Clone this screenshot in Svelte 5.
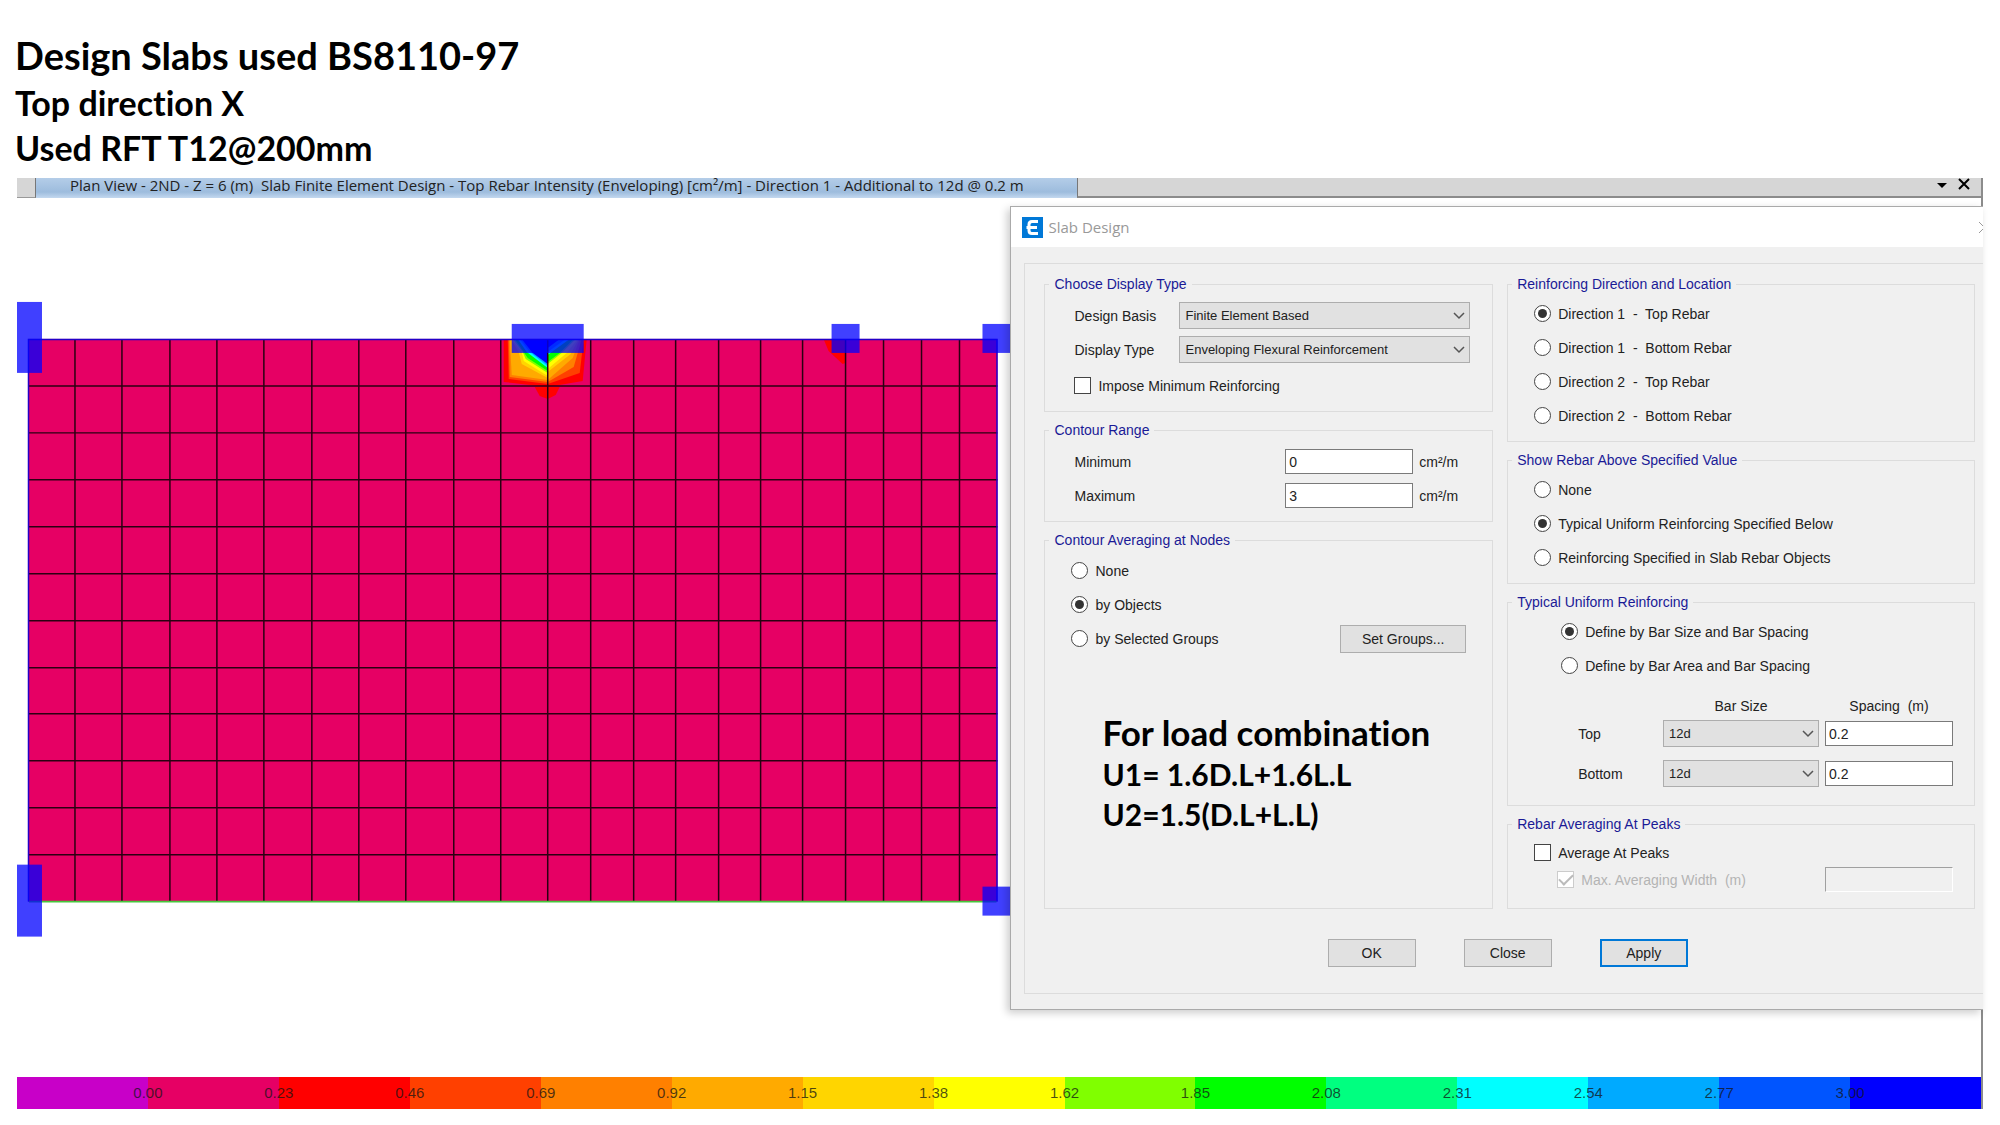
<script lang="ts">
  interface Option {
    value: string;
    label: string;
  }

  const meshX = [75, 122, 170, 217, 264, 312, 359, 406, 454, 501, 548, 591, 634, 676, 719, 761, 803, 846, 884, 922, 960];
  const meshY = [386, 433, 480, 527, 574, 621, 668, 714, 761, 808, 855];

  const columns = [
    { x: 17, y: 302, w: 25, h: 71 },
    { x: 17, y: 865, w: 25, h: 72 },
    { x: 512, y: 324, w: 72, h: 29 },
    { x: 832, y: 324, w: 28, h: 29 },
    { x: 983, y: 324, w: 28, h: 29 },
    { x: 983, y: 887, w: 28, h: 29 },
  ];

  // Contour bands around the supports, outermost first
  const bands = [
    { fill: '#ff0000', points: '504,339 504,382 548,387 583,381 587,339' },
    { fill: '#ff4000', points: '508,339 509,379 548,384 580,373 584,339' },
    { fill: '#ff8000', points: '509,339 510,377 548,382 574,367 582,339' },
    { fill: '#ffaa00', points: '510,339 512,375 548,380 573,358 580,339' },
    { fill: '#ffd500', points: '511,339 519,352 522,364 548,378 548,372 571,354 579,339' },
    { fill: '#ffff00', points: '512,339 522,352 524,361 548,376 548,369 567,353 578,339' },
    { fill: '#80ff00', points: '513,339 523,352 526,359 548,373 548,364 562,353 576,339' },
    { fill: '#00ff00', points: '515,339 524,352 528,358 548,371 548,362 560,353 574,339' },
    { fill: '#00ffff', points: '518,339 527,352 548,368 548,355 552,352 570,339' },
    { fill: '#00aaff', points: '520,339 530,352 548,366 548,352 566,339' },
    { fill: '#0000ff', points: '522,339 533,353 548,364 548,348 560,339' },
    { fill: '#ff0000', points: '535,387 560,387 556,395 548,399 540,396' },
    { fill: '#ff0000', points: '824,339 829,351 843,364 846,363 846,339' },
  ];

  const scaleColors = [
    '#c800c8', '#e60064', '#ff0000', '#ff4000', '#ff8000', '#ffaa00', '#ffd500', '#ffff00',
    '#80ff00', '#00ff00', '#00ff80', '#00ffff', '#00aaff', '#0055ff', '#0000ff',
  ];
  const scaleLabels = ['0.00', '0.23', '0.46', '0.69', '0.92', '1.15', '1.38', '1.62', '1.85', '2.08', '2.31', '2.54', '2.77', '3.00'];

  const directionOptions: Option[] = [
    { value: 'd1-top', label: 'Direction 1  -  Top Rebar' },
    { value: 'd1-bottom', label: 'Direction 1  -  Bottom Rebar' },
    { value: 'd2-top', label: 'Direction 2  -  Top Rebar' },
    { value: 'd2-bottom', label: 'Direction 2  -  Bottom Rebar' },
  ];
  const showOptions: Option[] = [
    { value: 'none', label: 'None' },
    { value: 'typical', label: 'Typical Uniform Reinforcing Specified Below' },
    { value: 'objects', label: 'Reinforcing Specified in Slab Rebar Objects' },
  ];
  const defineOptions: Option[] = [
    { value: 'size', label: 'Define by Bar Size and Bar Spacing' },
    { value: 'area', label: 'Define by Bar Area and Bar Spacing' },
  ];
  const averagingOptions: Option[] = [
    { value: 'none', label: 'None' },
    { value: 'objects', label: 'by Objects' },
    { value: 'groups', label: 'by Selected Groups' },
  ];

  let direction = $state('d1-top');
  let showAbove = $state('typical');
  let defineBy = $state('size');
  let averaging = $state('objects');
  let minimum = $state('0');
  let maximum = $state('3');
  let topSpacing = $state('0.2');
  let bottomSpacing = $state('0.2');
  let imposeMinimum = $state(false);
  let averageAtPeaks = $state(false);
</script>

{#snippet dropdown(id: string, options: string[])}
  <span class="dropdown">
    <select {id}>
      {#each options as option}
        <option>{option}</option>
      {/each}
    </select>
    <svg viewBox="0 0 12 8" aria-hidden="true"><path d="M1 1l5 5 5-5" /></svg>
  </span>
{/snippet}

<div class="page">
  <header>
    <h1>Design Slabs used BS8110-97</h1>
    <p>Top direction X</p>
    <p>Used RFT T12@200mm</p>
  </header>

  <main>
    <div class="tab-bar">
      <span class="tab-stub"></span>
      <div class="tab">Plan View - 2ND - Z = 6 (m)&nbsp; Slab Finite Element Design - Top Rebar Intensity (Enveloping) [cm²/m] - Direction 1 - Additional to 12d @ 0.2 m</div>
      <div class="tab-tools">
        <button type="button" aria-label="Window list">
          <svg width="12" height="14" viewBox="0 0 12 14"><path d="M1 5h10l-5 5z" fill="#000" /></svg>
        </button>
        <button type="button" aria-label="Close view">
          <svg width="12" height="14" viewBox="0 0 12 14"><path d="M1 1l10 10M11 1L1 11" stroke="#000" stroke-width="2" /></svg>
        </button>
      </div>
    </div>

    <div class="workspace">
      <svg class="plan" viewBox="17 198 994 879" preserveAspectRatio="xMinYMin meet" role="img" aria-label="Slab plan">
        <rect x="28" y="339" width="970" height="563" fill="#e60064" />
        {#each bands as band}
          <polygon points={band.points} fill={band.fill} />
        {/each}
        <g class="mesh">
          {#each meshX as x}
            <line x1={x} x2={x} y1="339" y2="902" />
          {/each}
          {#each meshY as y}
            <line x1="28" x2="998" y1={y} y2={y} />
          {/each}
        </g>
        <path class="edge" d="M28.500 902V339.500H997.500V902" />
        <line class="edge-bottom" x1="29" x2="997" y1="902" y2="902" />
        {#each columns as c}
          <rect class="column" x={c.x} y={c.y} width={c.w} height={c.h} />
        {/each}
      </svg>

      <section class="dialog">
        <div class="title-bar">
          <svg class="logo" viewBox="0 0 21 21" aria-hidden="true">
            <rect width="21" height="21" fill="#0078d7" />
            <path d="M16 4.500H10Q7 4.500 7 7.500V13.500Q7 16.500 10 16.500H16M4.500 10.500H15" />
          </svg>
          <h2>Slab Design</h2>
          <button type="button" class="close" aria-label="Close dialog">
            <svg width="13" height="13" viewBox="0 0 13 13"><path d="M1 1l11 11M12 1L1 12" stroke="#999" /></svg>
          </button>
        </div>

        <form class="frame" onsubmit={(e) => e.preventDefault()}>
          <div class="groups">
            <div class="stack">
              <fieldset>
                <legend>Choose Display Type</legend>
                <div class="row">
                  <label class="name" for="design-basis">Design Basis</label>
                  {@render dropdown('design-basis', ['Finite Element Based', 'Strip Based'])}
                </div>
                <div class="row">
                  <label class="name" for="display-type">Display Type</label>
                  {@render dropdown('display-type', ['Enveloping Flexural Reinforcement'])}
                </div>
                <label class="choice impose">
                  <input type="checkbox" bind:checked={imposeMinimum} />
                  <span>Impose Minimum Reinforcing</span>
                </label>
              </fieldset>

              <fieldset>
                <legend>Contour Range</legend>
                <div class="row range">
                  <label for="minimum">Minimum</label>
                  <input id="minimum" type="text" bind:value={minimum} />
                  <span class="unit">cm²/m</span>
                </div>
                <div class="row range">
                  <label for="maximum">Maximum</label>
                  <input id="maximum" type="text" bind:value={maximum} />
                  <span class="unit">cm²/m</span>
                </div>
              </fieldset>

              <fieldset class="options grow">
                <legend>Contour Averaging at Nodes</legend>
                {#each averagingOptions as option}
                  <div class="row split">
                    <label class="choice">
                      <input type="radio" name="averaging" value={option.value} bind:group={averaging} />
                      <span>{option.label}</span>
                    </label>
                    {#if option.value === 'groups'}
                      <button type="button" class="btn set-groups">Set Groups...</button>
                    {/if}
                  </div>
                {/each}
                <div class="note">
                  <h3>For load combination</h3>
                  <p>U1= 1.6D.L+1.6L.L</p>
                  <p>U2=1.5(D.L+L.L)</p>
                </div>
              </fieldset>
            </div>

            <div class="stack">
              <fieldset class="options">
                <legend>Reinforcing Direction and Location</legend>
                {#each directionOptions as option}
                  <label class="choice">
                    <input type="radio" name="direction" value={option.value} bind:group={direction} />
                    <span>{option.label}</span>
                  </label>
                {/each}
              </fieldset>

              <fieldset class="options">
                <legend>Show Rebar Above Specified Value</legend>
                {#each showOptions as option}
                  <label class="choice">
                    <input type="radio" name="show-above" value={option.value} bind:group={showAbove} />
                    <span>{option.label}</span>
                  </label>
                {/each}
              </fieldset>

              <fieldset class="options">
                <legend>Typical Uniform Reinforcing</legend>
                <div class="indent">
                  {#each defineOptions as option}
                    <label class="choice">
                      <input type="radio" name="define-by" value={option.value} bind:group={defineBy} />
                      <span>{option.label}</span>
                    </label>
                  {/each}
                </div>
                <div class="bars">
                  <span></span>
                  <span class="head">Bar Size</span>
                  <span class="head">Spacing&nbsp; (m)</span>
                  <label for="top-bar">Top</label>
                  {@render dropdown('top-bar', ['12d', '16d', '20d'])}
                  <input type="text" aria-label="Top spacing" bind:value={topSpacing} />
                  <label for="bottom-bar">Bottom</label>
                  {@render dropdown('bottom-bar', ['12d', '16d', '20d'])}
                  <input type="text" aria-label="Bottom spacing" bind:value={bottomSpacing} />
                </div>
              </fieldset>

              <fieldset class="options peaks">
                <legend>Rebar Averaging At Peaks</legend>
                <label class="choice">
                  <input type="checkbox" bind:checked={averageAtPeaks} />
                  <span>Average At Peaks</span>
                </label>
                <div class="row split">
                  <label class="choice disabled">
                    <input type="checkbox" checked disabled />
                    <span>Max. Averaging Width&nbsp; (m)</span>
                  </label>
                  <input type="text" aria-label="Max. averaging width" disabled />
                </div>
              </fieldset>
            </div>
          </div>

          <div class="actions">
            <button type="submit" class="btn">OK</button>
            <button type="button" class="btn">Close</button>
            <button type="button" class="btn default">Apply</button>
          </div>
        </form>
      </section>
    </div>

    <div class="scale">
      <div class="scale-colors">
        {#each scaleColors as color}
          <span style="background: {color}"></span>
        {/each}
      </div>
      <div class="scale-labels">
        {#each scaleLabels as label}
          <span>{label}</span>
        {/each}
      </div>
    </div>
  </main>
</div>

<style>
  :global(body) {
    background: #fff;
  }

  .page {
    padding: 30px 17px 16px;
    color: #222;
    font-family: 'Liberation Sans', Arial, sans-serif;
    font-size: 14px;
    line-height: 18px;
  }

  .page * {
    box-sizing: border-box;
  }

  h1,
  h2,
  h3,
  p {
    margin: 0;
  }

  button,
  input,
  select {
    margin: 0;
    padding: 0;
    font: inherit;
    color: inherit;
  }

  header,
  .note {
    color: #000;
    font-family: Lato, 'Open Sans', sans-serif;
    font-variant-ligatures: none;
    font-weight: 700;
  }

  header {
    margin-left: -2px;
    padding-bottom: 8px;
    font-size: 34px;
    line-height: 45px;
  }

  h1 {
    font-size: 38px;
    line-height: 50px;
  }

  main {
    border-right: 2px solid #8c8c8c;
  }

  .tab-bar {
    display: flex;
    height: 20px;
    background: #d6d6d6;
  }

  .tab-stub {
    width: 19px;
    border-right: 1px solid #777;
    border-bottom: 1px solid #999;
  }

  .tab {
    flex: 0 0 53%;
    padding-left: 34px;
    background: linear-gradient(#b4cde8, #9dbcdd 70%, #c3d8ef);
    font-family: 'Open Sans', sans-serif;
    font-size: 15px;
    line-height: 14px;
    white-space: nowrap;
  }

  .tab-tools {
    display: flex;
    flex: 1;
    justify-content: flex-end;
    align-items: flex-start;
    gap: 10px;
    padding-right: 11px;
    border-left: 1px solid #777;
    border-bottom: 2px solid #8c8c8c;
  }

  .tab-tools button,
  .close {
    display: flex;
    border: 0;
    background: none;
  }

  .workspace {
    display: grid;
    grid-template-columns: 994fr 971fr;
    align-items: start;
  }

  .plan {
    display: block;
    width: 100%;
  }

  .mesh line {
    stroke: #2a0012;
    stroke-width: 1.5;
  }

  .edge {
    fill: none;
    stroke: #2200c8;
    stroke-width: 1.5;
  }

  .edge-bottom {
    stroke: #46c83c;
    stroke-width: 2;
  }

  .column {
    fill: #0000ff;
    fill-opacity: 0.75;
  }

  .dialog {
    position: relative;
    margin: 8px -2px 0 0;
    border: 1px solid #aaa;
    border-right: 0;
    background: #f0f0f0;
    box-shadow: -3px 3px 8px rgba(0, 0, 0, 0.2);
  }

  .title-bar {
    display: flex;
    align-items: center;
    gap: 5px;
    height: 40px;
    padding-left: 11px;
    overflow: hidden;
    background: #fff;
  }

  .logo {
    width: 21px;
    height: 21px;
  }

  .logo path {
    fill: none;
    stroke: #fff;
    stroke-width: 3;
  }

  h2 {
    flex: 1;
    color: #999;
    font-family: 'Open Sans', sans-serif;
    font-size: 15px;
    font-weight: 400;
  }

  .close {
    margin-right: -8px;
  }

  .frame {
    margin: 16px 0 15px 13px;
    padding: 11px 8px 26px 19px;
    border: 1px solid #dcdcdc;
    border-right: 0;
  }

  .groups {
    display: grid;
    grid-template-columns: 448fr 467fr;
    gap: 14px;
  }

  .stack {
    display: flex;
    flex-direction: column;
    gap: 9px;
  }

  fieldset {
    display: flex;
    flex-direction: column;
    gap: 7px;
    min-width: 0;
    margin: 0;
    padding: 9px 22px 12px 29px;
    border: 1px solid #dcdcdc;
  }

  fieldset.options {
    padding: 7px 21px 12px 26px;
  }

  fieldset.grow {
    flex: 1;
    padding-top: 8px;
    padding-right: 26px;
  }

  legend {
    margin-left: -25px;
    padding: 0 5px;
    color: #1a1a96;
  }

  .options legend {
    margin-left: -22px;
  }

  .row {
    display: flex;
    align-items: center;
    height: 27px;
  }

  .name {
    width: 105px;
  }

  .row .dropdown {
    flex: 1;
  }

  .range {
    display: grid;
    grid-template-columns: 1fr 128px 51px;
    gap: 6px;
  }

  .split {
    justify-content: space-between;
  }

  .choice {
    display: flex;
    align-items: center;
    gap: 7px;
    height: 27px;
    white-space: pre;
  }

  .impose {
    margin-top: 2px;
  }

  .disabled {
    padding-left: 23px;
    color: #b4b4b4;
  }

  input[type='radio'],
  input[type='checkbox'] {
    appearance: none;
    display: grid;
    place-items: center;
    flex: none;
    width: 17px;
    height: 17px;
    border: 1px solid #444;
    background: #fff;
  }

  input[type='radio'] {
    border-radius: 50%;
  }

  input[type='radio']:checked::before {
    content: '';
    width: 9px;
    height: 9px;
    border-radius: 50%;
    background: #333;
  }

  input[type='checkbox']:checked::before {
    content: '';
    width: 12px;
    height: 6px;
    border: solid #444;
    border-width: 0 0 2px 2px;
    transform: translateY(-2px) rotate(-45deg);
  }

  input[type='checkbox']:disabled {
    border-color: #ccc;
  }

  input[type='checkbox']:disabled::before {
    border-color: #bbb;
  }

  input[type='text'] {
    width: 128px;
    height: 25px;
    padding: 0 3px;
    border: 1px solid #7a7a7a;
    background: #fff;
  }

  input[type='text']:disabled {
    border-color: #a0a0a0 #fff #fff #a0a0a0;
    background: #f0f0f0;
  }

  .dropdown {
    display: grid;
    align-items: center;
    height: 27px;
  }

  .dropdown > * {
    grid-area: 1 / 1;
  }

  .dropdown select {
    appearance: none;
    width: 100%;
    height: 27px;
    padding: 0 24px 0 5px;
    border: 1px solid #adadad;
    border-radius: 0;
    background: #e1e1e1;
    font-size: 13px;
  }

  .dropdown svg {
    justify-self: end;
    width: 12px;
    height: 8px;
    margin-right: 5px;
    fill: none;
    stroke: #555;
    stroke-width: 1.5;
    pointer-events: none;
  }

  .btn {
    width: 88px;
    height: 28px;
    border: 1px solid #adadad;
    background: #e1e1e1;
  }

  .btn.set-groups {
    width: 126px;
  }

  .btn.default {
    border: 2px solid #0078d7;
  }

  .note {
    padding: 51px 0 0 31px;
    font-size: 30px;
    line-height: 40px;
    white-space: nowrap;
  }

  .note h3 {
    font-size: 35px;
    line-height: 44px;
  }

  .indent {
    display: flex;
    flex-direction: column;
    gap: 7px;
    padding-left: 27px;
  }

  .bars {
    display: grid;
    grid-template-columns: 1fr 156px 128px;
    align-items: center;
    gap: 13px 6px;
    padding: 11px 0 6px 44px;
  }

  .head {
    margin-bottom: -8px;
    text-align: center;
  }

  fieldset.peaks {
    gap: 0;
    padding-top: 6px;
    padding-bottom: 15px;
  }

  .actions {
    display: flex;
    justify-content: center;
    gap: 48px;
    margin-top: 30px;
    padding-right: 4px;
  }

  .scale {
    display: grid;
    height: 32px;
    color: rgba(20, 20, 20, 0.75);
    font-size: 15px;
  }

  .scale > * {
    grid-area: 1 / 1;
    display: flex;
  }

  .scale span {
    flex: 1;
    text-align: center;
  }

  .scale-labels {
    align-items: center;
    padding: 0 calc(100% / 30);
  }
</style>
